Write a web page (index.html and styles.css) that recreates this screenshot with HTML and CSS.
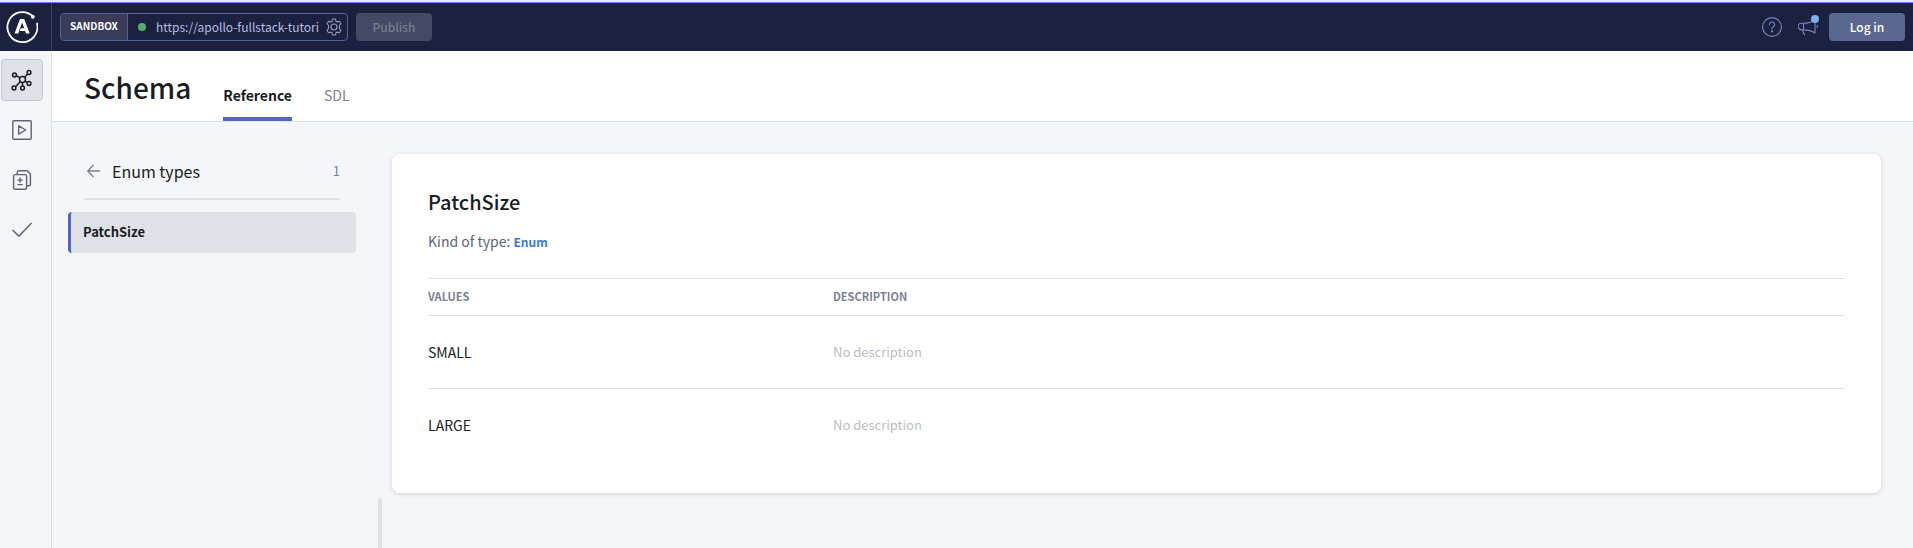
FILE: index.html
```html
<!DOCTYPE html>
<html lang="en">
<head>
<meta charset="utf-8">
<meta name="viewport" content="width=device-width, initial-scale=1">
<title>Schema reference</title>
<link rel="stylesheet" href="styles.css">
</head>
<body>
<div class="app">
  <header class="topbar">
    <a class="logo" href="#" aria-label="Home">
      <svg width="32" height="32" viewBox="0 0 32 32" fill="none" stroke="#fff">
        <path d="M26.300 4.800A15 15 0 1 0 31 12.500" stroke-width="1.800" stroke-linecap="round"/>
        <circle cx="26.800" cy="5.800" r="1.900" fill="#fff" stroke="none"/>
        <path d="M14 8h4.200l5.500 14.600h-3.700l-.9-2.600h-5.300l1-2.700h3.400L16.100 11.400l-3.900 11.200H8.500z" fill="#fff" stroke="none"/>
      </svg>
    </a>
    <div class="endpoint">
      <span class="endpoint-kind">SANDBOX</span>
      <span class="endpoint-dot"></span>
      <input class="endpoint-url" type="text" aria-label="Endpoint URL" value="https://apollo-fullstack-tutorial.herokuapp.com">
      <button class="icon-button" aria-label="Connection settings">
        <svg width="18" height="18" viewBox="0 0 18 18" fill="none" stroke="currentColor" stroke-width="1.100" stroke-linejoin="round">
          <circle cx="9" cy="9" r="3"/>
          <path d="M7.500 1h3l.5 2.300 1.200.6 2.300-.7 1.500 2.500-1.600 1.800v3l1.600 1.800-1.500 2.500-2.300-.7-1.200.6-.5 2.300h-3L7 14.700l-1.200-.6-2.300.7L2 12.300l1.600-1.800v-3L2 5.700l1.500-2.500 2.300.7L7 3.300z"/>
        </svg>
      </button>
    </div>
    <button class="button button-publish" disabled>Publish</button>
    <div class="topbar-actions">
      <button class="icon-button" aria-label="Help">
        <svg width="20" height="20" viewBox="0 0 20 20" fill="none" stroke="currentColor" stroke-width="1.100" stroke-linecap="round">
          <circle cx="10" cy="10" r="9.400"/>
          <path d="M7.400 7.600a2.600 2.600 0 1 1 3.600 2.400c-.7.300-1 .7-1 1.400v.5"/>
          <circle cx="10" cy="14.400" r=".5" fill="currentColor"/>
        </svg>
      </button>
      <button class="icon-button news" aria-label="What's new">
        <svg width="20" height="20" viewBox="0 0 20 20" fill="none" stroke="currentColor" stroke-width="1.100" stroke-linejoin="round" stroke-linecap="round">
          <path d="M5.500 6.300h-2a3.200 3.200 0 0 0 0 6.600h2zM5.500 6.300c5 0 8.500-1.200 11.500-3.300v13c-3-2-6.500-3.100-11.500-3.100M4.800 13c0 2 .6 3.400 1.900 4.700M19.200 8.300v2.200"/>
        </svg>
        <span class="news-dot"></span>
      </button>
      <button class="button button-login">Log in</button>
    </div>
  </header>

  <div class="body">
    <nav class="rail" aria-label="Sections">
      <a class="rail-link active" href="#" aria-label="Schema">
        <svg width="22" height="22" viewBox="0 0 22 22" fill="none" stroke="currentColor" stroke-width="1.500">
          <circle cx="11.500" cy="10.500" r="3"/>
          <circle cx="3.500" cy="6" r="1.900"/><circle cx="18" cy="3.500" r="1.900"/><circle cx="18" cy="14.500" r="1.900"/><circle cx="11.500" cy="19" r="1.900"/><circle cx="3" cy="19" r="1.900"/>
          <path d="M5.300 6.700l3.700 2.200M16.700 5l-3.100 3.200M14 12.200l2.500 1.400M11.500 13.500V17M4.500 17.700l4.800-5"/>
        </svg>
      </a>
      <a class="rail-link" href="#" aria-label="Explorer">
        <svg width="20" height="20" viewBox="0 0 20 20" fill="none" stroke="currentColor" stroke-width="1.400" stroke-linejoin="round">
          <rect x=".8" y=".8" width="18.400" height="18.400" rx="1"/><path d="M6.700 5.800v8.400l7-4.200z"/>
        </svg>
      </a>
      <a class="rail-link" href="#" aria-label="Changelog">
        <svg width="20" height="20" viewBox="0 0 20 20" fill="none" stroke="currentColor" stroke-width="1.400" stroke-linecap="round" stroke-linejoin="round">
          <rect x="1.600" y="4.600" width="13" height="14.700" rx="1.500"/>
          <path d="M5.200 4.400V2.200A1.500 1.500 0 0 1 6.700.7h8.400l3.300 3.200v10.400a1.500 1.500 0 0 1-1.500 1.500h-2M8.100 7.900v4.400M5.900 10.100h4.400M5.900 14.600h4.400"/>
        </svg>
      </a>
      <a class="rail-link" href="#" aria-label="Checks">
        <svg width="20" height="20" viewBox="0 0 20 20" fill="none" stroke="currentColor" stroke-width="1.500" stroke-linecap="round" stroke-linejoin="round">
          <path d="M.9 10.300l6 5.900L19 3.400"/>
        </svg>
      </a>
    </nav>

    <div class="page">
      <div class="page-header">
        <h1 class="page-title">Schema</h1>
        <nav class="tabs" aria-label="Schema views">
          <a class="tab active" href="#">Reference</a>
          <a class="tab" href="#">SDL</a>
        </nav>
      </div>
      <div class="content">
        <aside class="types">
          <div class="types-header">
            <a class="back" href="#" aria-label="Back">
              <svg width="14" height="14" viewBox="0 0 14 14" fill="none" stroke="currentColor" stroke-width="1.300" stroke-linecap="round" stroke-linejoin="round"><path d="M12.500 7H.900M6.200 1.300L.7 7l5.500 5.700"/></svg>
            </a>
            <h2 class="types-title">Enum types</h2>
            <span class="types-count">1</span>
          </div>
          <a class="type-link" href="#">PatchSize</a>
        </aside>
        <div class="resizer"></div>
        <main class="card">
          <h2 class="card-title">PatchSize</h2>
          <p class="kind">Kind of type: <a class="kind-link" href="#">Enum</a></p>
          <table class="values">
            <thead><tr><th class="name-col">VALUES</th><th>DESCRIPTION</th></tr></thead>
            <tbody>
              <tr><td>SMALL</td><td class="empty">No description</td></tr>
              <tr><td>LARGE</td><td class="empty">No description</td></tr>
            </tbody>
          </table>
        </main>
      </div>
    </div>
  </div>
</div>
</body>
</html>
```

FILE: styles.css
```css
* { box-sizing: border-box; }

body {
  margin: 0;
  background: #f4f5f8;
  color: #191c23;
  font-family: "Noto Sans CJK SC", "Noto Sans", sans-serif;
  font-size: 14px;
  line-height: 20px;
}

a { color: inherit; text-decoration: none; }
h1, h2, p { margin: 0; }
button, input { font: inherit; color: inherit; }
svg { display: block; }

.app {
  display: flex;
  flex-direction: column;
  min-height: 100vh;
  border-top: 2px solid #e8ebfb;
}

.topbar {
  display: flex;
  align-items: center;
  height: 49px;
  border-top: 1px solid #7183e8;
  background: #1c2140;
  color: #7889bb;
}

.logo {
  display: flex;
  align-items: center;
  width: 52px;
  height: 48px;
  padding-left: 6px;
  border-right: 1px solid #3b4266;
}

.endpoint {
  display: flex;
  align-items: center;
  width: 288px;
  height: 28px;
  margin-left: 8px;
  padding-right: 4px;
  overflow: hidden;
  border: 1px solid #52639a;
  border-radius: 4px;
}

.endpoint-kind {
  flex: none;
  width: 67px;
  border-right: 1px solid #52639a;
  background: #3a3c59;
  color: #fff;
  font-size: 10px;
  font-weight: 700;
  line-height: 24px;
  padding-bottom: 2px;
  text-align: center;
}

.endpoint-dot {
  flex: none;
  width: 8px;
  height: 8px;
  margin: 0 10px;
  border-radius: 50%;
  background: #56ad65;
}

.endpoint-url {
  flex: 1;
  min-width: 0;
  height: 26px;
  margin-right: 6px;
  padding: 0 0 1px;
  border: 0;
  outline: 0;
  background: none;
  color: #b5bfe0;
  font-size: 12px;
}

.icon-button {
  display: block;
  flex: none;
  padding: 0;
  border: 0;
  background: none;
}

.endpoint .icon-button { color: #8f9bc2; }

.button {
  width: 76px;
  height: 28px;
  padding: 0 0 1px;
  border: 0;
  border-radius: 4px;
  font-size: 12px;
  font-weight: 500;
}

.button-publish {
  margin-left: 8px;
  background: #424a66;
  color: #777d8d;
}

.button-login {
  background: #5a678f;
  color: #fff;
}

.topbar-actions {
  display: flex;
  align-items: center;
  gap: 16px;
  margin-left: auto;
  padding-right: 8px;
}

.news { position: relative; margin-right: -5px; }

.news-dot {
  position: absolute;
  top: -2px;
  right: -1px;
  width: 8px;
  height: 8px;
  border-radius: 50%;
  background: #7cb0f5;
}

.body { display: flex; flex: 1; }

.rail {
  display: flex;
  flex: none;
  flex-direction: column;
  gap: 8px;
  width: 52px;
  padding: 8px 1px;
  border-right: 1px solid #dee1e7;
}

.rail-link {
  display: flex;
  align-items: center;
  justify-content: center;
  width: 42px;
  height: 42px;
  border: 1px solid transparent;
  border-radius: 4px;
  color: #5d6478;
}

.rail-link.active {
  border-color: #c5cad3;
  background: #dee1e6;
  color: #191c23;
}

.page {
  display: flex;
  flex: 1;
  flex-direction: column;
  min-width: 0;
}

.page-header {
  display: flex;
  height: 71px;
  padding-left: 32px;
  border-bottom: 1px solid #dee1e7;
  background: #fff;
}

.page-title {
  font-size: 28px;
  font-weight: 500;
  line-height: 72px;
}

.tabs {
  display: flex;
  gap: 32px;
  margin-left: 32px;
}

.tab {
  display: block;
  padding-top: 34px;
  color: #7b8093;
  font-size: 14px;
}

.tab.active {
  border-bottom: 4px solid #5465bd;
  border-radius: 3px 3px 0 0;
  color: #191c23;
  font-weight: 700;
}

.content {
  display: flex;
  flex: 1;
  padding-right: 32px;
}

.types {
  flex: none;
  width: 304px;
  padding: 32px 0 0 16px;
}

.types-header {
  display: flex;
  align-items: center;
  height: 46px;
  margin: 0 16px 12px;
  padding: 0 0 10px 3px;
  border-bottom: 2px solid #dee1e7;
}

.back { color: #7b8093; }

.types-title {
  margin-left: 11px;
  font-size: 16px;
  font-weight: 400;
}

.types-count {
  margin-left: auto;
  color: #7b8093;
  font-size: 13px;
}

.type-link {
  display: block;
  padding: 10px 12px 11px;
  border-left: 3px solid #5465bd;
  border-radius: 4px;
  background: #dee1e6;
  font-size: 13px;
  font-weight: 700;
}

.resizer {
  flex: none;
  width: 4px;
  margin: 376px 10px 0 22px;
  border-radius: 2px 2px 0 0;
  background: #dee1e6;
}

.card {
  flex: 1;
  align-self: flex-start;
  min-width: 0;
  margin-top: 32px;
  padding: 32px 36px 31px;
  border-radius: 8px;
  background: #fff;
  box-shadow: 0 1px 4px rgba(25, 28, 35, 0.16);
}

.card-title {
  font-size: 20px;
  font-weight: 500;
  line-height: 32px;
}

.kind {
  margin: 13px 0 26px;
  color: #5d6478;
}

.kind-link {
  color: #3b78d6;
  font-size: 12px;
  font-weight: 700;
}

.values {
  width: 100%;
  border-collapse: collapse;
  table-layout: fixed;
}

.values th {
  height: 37px;
  padding: 0 0 2px;
  border-top: 1px solid #dee1e7;
  color: #7b8093;
  font-size: 11px;
  font-weight: 700;
  text-align: left;
}

.values .name-col { width: 405px; }

.values td {
  height: 73px;
  padding: 0;
  border-top: 1px solid #dee1e7;
}

.values .empty {
  color: #b8bcc8;
  font-size: 13px;
}
```
